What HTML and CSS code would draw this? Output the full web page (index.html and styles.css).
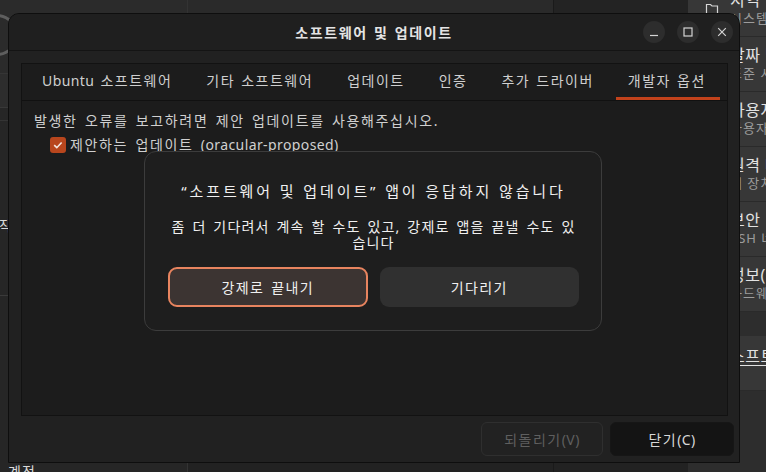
FILE: index.html
```html
<!DOCTYPE html>
<html lang="ko">
<head>
<meta charset="UTF-8">
<link rel="stylesheet" href="styles.css">
</head>
<body>
<div class="desktop">
  <!-- settings app behind the window -->
  <aside class="side">
    <div class="side-head"><span class="side-logo"></span></div>
    <div class="side-search"></div>
    <div class="side-gap"></div>
    <ul class="side-list">
      <li class="side-item">네트워크</li>
      <li class="side-item side-cut">시작</li>
      <li class="side-item">디스플레이</li>
      <li class="side-item side-sep">알림</li>
      <li class="side-item">검색</li>
    </ul>
    <div class="side-foot">계정</div>
  </aside>
  <div class="mid">
    <div class="mid-top"></div>
  </div>
  <div class="mid mid-right">
    <div class="mid-top"></div>
  </div>
  <div class="list">
    <div class="list-group">
      <div class="row">
        <svg class="row-icon" width="14" height="14" viewBox="0 0 14 14"><path d="M1.5 2.5h4l1.5 1.5h5.5v8h-11z" fill="none" stroke="#d6d6d6" stroke-width="1.2"/></svg>
        <div class="row-text"><span class="row-title">지역 및 언어</span><span class="row-sub">시스템 언어</span></div>
      </div>
      <div class="row">
        <span class="row-icon"></span>
        <div class="row-text"><span class="row-title">날짜 및 시간</span><span class="row-sub">표준 시간대</span></div>
      </div>
      <div class="row">
        <span class="row-icon"></span>
        <div class="row-text"><span class="row-title">사용자</span><span class="row-sub">사용자 관리</span></div>
      </div>
      <div class="row">
        <span class="row-icon"></span>
        <div class="row-text"><span class="row-title">원격 데스크톱</span><span class="row-sub">내 장치 원격 제어</span></div>
      </div>
      <div class="row">
        <span class="row-icon"></span>
        <div class="row-text"><span class="row-title">보안</span><span class="row-sub">SSH 네트워크</span></div>
      </div>
      <div class="row">
        <span class="row-icon"></span>
        <div class="row-text"><span class="row-title">정보(시스템)</span><span class="row-sub">하드웨어 정보</span></div>
      </div>
    </div>
    <div class="list-group">
      <div class="row row-link">
        <span class="row-icon"></span>
        <div class="row-text"><span class="row-title">소프트웨어 및 업데이트</span></div>
      </div>
    </div>
  </div>
</div>

<div class="window">
  <header class="titlebar">
    <span></span>
    <h1 class="title">소프트웨어 및 업데이트</h1>
    <div class="controls">
      <span class="ctl"><svg width="10" height="10" viewBox="0 0 10 10"><path d="M1 8.5h8" stroke="#d4d4d4" stroke-width="1.2"/></svg></span>
      <span class="ctl"><svg width="10" height="10" viewBox="0 0 10 10"><rect x="1" y="1" width="8" height="8" fill="none" stroke="#d4d4d4" stroke-width="1.2"/></svg></span>
      <span class="ctl"><svg width="10" height="10" viewBox="0 0 10 10"><path d="M1.2 1.2l7.6 7.6M8.8 1.2l-7.6 7.6" stroke="#d4d4d4" stroke-width="1.2"/></svg></span>
    </div>
  </header>

  <div class="win-body">
    <div class="notebook">
      <nav class="tabs">
        <span class="tab"><span class="lat">Ubuntu</span> 소프트웨어</span>
        <span class="tab">기타 소프트웨어</span>
        <span class="tab">업데이트</span>
        <span class="tab">인증</span>
        <span class="tab">추가 드라이버</span>
        <span class="tab active">개발자 옵션</span>
      </nav>
      <div class="page">
        <p class="page-note">발생한 오류를 보고하려면 제안 업데이트를 사용해주십시오.</p>
        <label class="check-row">
          <span class="check"><svg width="16" height="16" viewBox="0 0 16 16"><path d="M4.2 8.2l2.6 2.5 4.8-5.2" fill="none" stroke="#f4e6e0" stroke-width="1.6"/></svg></span>
          <span>제안하는 업데이트 <span class="lat">(oracular-proposed)</span></span>
        </label>
      </div>
    </div>
    <div class="actions">
      <button class="btn btn-off">되돌리기<span class="lat">(V)</span></button>
      <button class="btn btn-close">닫기<span class="lat">(C)</span></button>
    </div>
  </div>

  <div class="alert">
    <h2 class="alert-title">“소프트웨어 및 업데이트” 앱이 응답하지 않습니다</h2>
    <p class="alert-body">좀 더 기다려서 계속 할 수도 있고, 강제로 앱을 끝낼 수도 있<br>습니다</p>
    <div class="alert-actions">
      <button class="abtn abtn-kill">강제로 끝내기</button>
      <button class="abtn abtn-wait">기다리기</button>
    </div>
  </div>
</div>
</body>
</html>
```

FILE: styles.css
```css
html, body {
    margin: 0;
    width: 766px;
    height: 472px;
    overflow: hidden;
    background: #222222;
    font-family: "Noto Sans", "Noto Sans CJK KR", sans-serif;
}

.lat {
    letter-spacing: 0.4px;
}

/* ---- settings app in the back ---- */
.desktop {
    display: grid;
    grid-template-columns: 188px 365px 135px 78px;
    height: 472px;
}

.side {
    background: #262626;
    border-right: 1px solid #333;
    display: flex;
    flex-direction: column;
    overflow: hidden;
}
.side-head {
    height: 73px;
    background: #2b2b2b;
    border-bottom: 1px solid #353535;
    position: relative;
    flex: none;
}
.side-logo {
    position: absolute;
    left: -24px;
    top: 14px;
    width: 36px;
    height: 36px;
    border: 3px solid #5e5e5e;
    border-radius: 50%;
}
.side-search {
    height: 33px;
    background: #2d2d2d;
    border-bottom: 1px solid #383838;
    flex: none;
}
.side-gap {
    height: 12px;
    border-bottom: 1px solid #343434;
    flex: none;
}
.side-list {
    list-style: none;
    margin: 0;
    padding: 36px 0 0;
    flex: 1;
    min-height: 0;
    overflow: hidden;
}
.side-item {
    height: 46px;
    line-height: 46px;
    padding-left: 8px;
    color: #d8d8d8;
    font-size: 14px;
    white-space: nowrap;
}
.side-cut {
    margin-left: -22px;
}
.side-sep {
    border-top: 1px solid #3a3a3a;
}
.side-foot {
    flex: none;
    height: 9px;
    padding: 13px 0 0 8px;
    color: #d8d8d8;
    font-size: 14px;
    line-height: 18px;
    letter-spacing: 1px;
}

.mid {
    background: #222222;
}
.mid-top {
    height: 13px;
    background: #2a2a2a;
}
.mid-right {
    border-left: 1px solid #1a1a1a;
}
.mid-right .mid-top {
    background: #232323;
}

.list {
    background: #2d2d2d;
    overflow: hidden;
}
.list-group {
    background: #373737;
    margin-bottom: 24px;
}
.list-group:first-child {
    margin-top: -18px;
}
.row {
    display: flex;
    height: 55px;
    border-bottom: 1px solid #2a2a2a;
    box-sizing: border-box;
    white-space: nowrap;
}
.row-icon {
    width: 14px;
    margin: 20px 0 0 17px;
    flex: none;
}
.row-text {
    display: flex;
    flex-direction: column;
    padding: 8px 0 0 11px;
}
.row-title {
    font-size: 16px;
    line-height: 20px;
    letter-spacing: 0.5px;
    color: #e2e2e2;
}
.row-sub {
    font-size: 13px;
    line-height: 16px;
    letter-spacing: 1px;
    color: #9c9c9c;
}
.row-link .row-text {
    padding-top: 10px;
}
.row-link .row-title {
    text-decoration: underline;
    text-underline-offset: 3px;
}

/* ---- software & updates window ---- */
.window {
    position: absolute;
    left: 8px;
    top: 13px;
    width: 732px;
    height: 450px;
    box-sizing: border-box;
    border: 1px solid #0e0e0e;
    border-radius: 11px 11px 0 0;
    background: #212121;
    display: flex;
    flex-direction: column;
}

.titlebar {
    height: 36px;
    border-bottom: 1px solid #141414;
    border-radius: 10px 10px 0 0;
    background: #1f1f1f;
    display: grid;
    grid-template-columns: 1fr auto 1fr;
    align-items: center;
    flex: none;
}
.title {
    margin: 0;
    font-size: 14px;
    font-weight: 700;
    letter-spacing: 1.6px;
    word-spacing: 1px;
    color: #e4e4e4;
}
.controls {
    display: flex;
    justify-content: flex-end;
    gap: 12px;
    padding-right: 6px;
}
.ctl {
    width: 22px;
    height: 22px;
    border-radius: 50%;
    background: #2d2d2d;
    display: flex;
    align-items: center;
    justify-content: center;
}

.win-body {
    flex: 1;
    display: flex;
    flex-direction: column;
    padding: 12px 5px 0 12px;
}

.notebook {
    height: 353px;
    box-sizing: border-box;
    margin-right: 6px;
    border: 1px solid #121212;
    background: #1c1c1c;
    display: flex;
    flex-direction: column;
}
.tabs {
    display: flex;
    height: 36px;
    padding-left: 3px;
    border-bottom: 1px solid #111;
}
.tab {
    margin: 0 5px;
    padding: 0 12px;
    line-height: 34px;
    font-size: 14px;
    letter-spacing: 1.5px;
    word-spacing: 1px;
    color: #cfcfcf;
    white-space: nowrap;
    border-bottom: 3px solid transparent;
}
.tab.active {
    border-bottom-color: #c2421b;
    padding-right: 14px;
}

.page {
    padding: 10px 12px;
    color: #d0d0d0;
    font-size: 14px;
    letter-spacing: 1.65px;
}
.page-note {
    margin: 0;
    line-height: 20px;
    word-spacing: 2px;
}
.check-row {
    display: flex;
    align-items: center;
    gap: 4px;
    margin: 4px 0 0 16px;
    line-height: 20px;
    word-spacing: 2px;
}
.check {
    width: 16px;
    height: 16px;
    border-radius: 3px;
    background: #b8461d;
    display: flex;
}

.actions {
    display: flex;
    justify-content: flex-end;
    gap: 7px;
    margin-top: 6px;
}
.btn {
    height: 34px;
    border-radius: 6px;
    font-family: inherit;
    font-size: 14px;
    letter-spacing: 1.5px;
    padding: 0;
}
.btn-off {
    width: 122px;
    background: #222222;
    border: 1px solid #2f2f2f;
    color: #5f5f5f;
}
.btn-close {
    width: 124px;
    background: #141414;
    border: 1px solid #161616;
    color: #d8d8d8;
}

/* ---- not responding dialog ---- */
.alert {
    position: absolute;
    left: 135px;
    top: 137px;
    width: 458px;
    height: 180px;
    box-sizing: border-box;
    border: 1px solid #3c3c3c;
    border-radius: 12px;
    background: #1e1e1e;
    padding: 28px 22px 0 23px;
    text-align: center;
    color: #f0f0f0;
}
.alert-title {
    margin: 0;
    font-size: 15px;
    font-weight: 400;
    line-height: 22px;
    letter-spacing: 2.9px;
}
.alert-body {
    margin: 17px 0 0;
    font-size: 14px;
    line-height: 16px;
    letter-spacing: 1.2px;
    word-spacing: 2px;
}
.alert-actions {
    display: grid;
    grid-template-columns: 1fr 1fr;
    gap: 12px;
    margin-top: 16px;
}
.abtn {
    height: 40px;
    border-radius: 9px;
    font-family: inherit;
    font-size: 14px;
    letter-spacing: 1.4px;
    word-spacing: 2px;
    color: #f0f0f0;
}
.abtn-kill {
    background: #3c3432;
    border: 2px solid #e8845f;
}
.abtn-wait {
    background: #303030;
    border: 0;
}
```
